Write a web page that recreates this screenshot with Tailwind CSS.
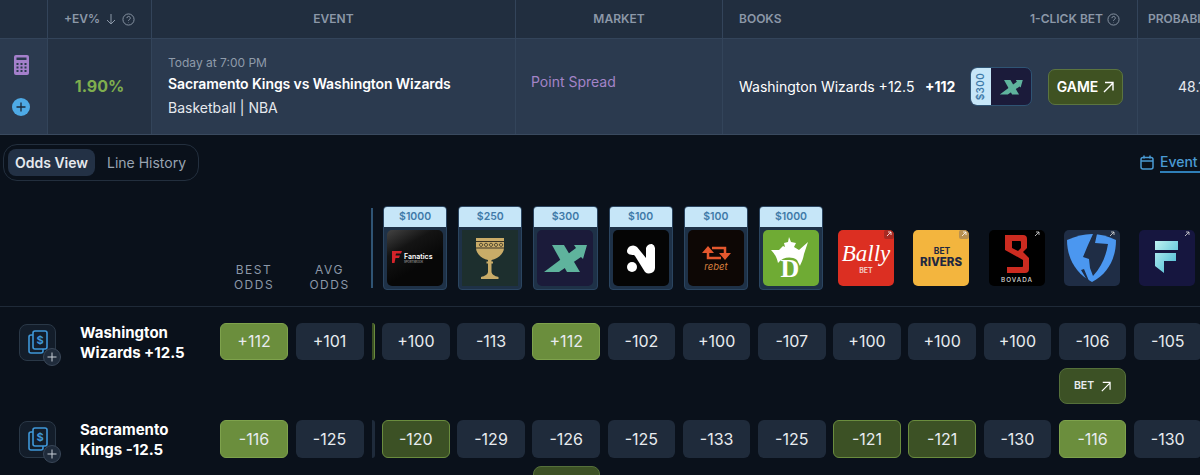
<!DOCTYPE html>
<html lang="en">
<head>
    <meta charset="UTF-8">
    <title>Odds View</title>
    <script src="https://cdn.jsdelivr.net/npm/@tailwindcss/browser@4"></script>
</head>
<body class="bg-[#0a111b] font-['Inter',sans-serif] text-white">
<div class="w-[1200px] h-[475px] overflow-hidden">

    <!-- table header -->
    <div class="flex h-[39px] w-[1300px] bg-[#212e3f] border-b border-[#33445a] text-[12px] font-semibold text-[#8c98a8]">
        <div class="w-[48px] border-r border-[#33445a]"></div>
        <div class="w-[104px] border-r border-[#33445a] flex items-center justify-center gap-[5px]">
            <span>+EV%</span>
            <svg class="w-[12px] h-[12px]" viewBox="0 0 12 12" fill="none" stroke="#8c98a8" stroke-width="1"><path d="M6 1v10M2 7l4 4 4-4"/></svg>
            <svg class="w-[13px] h-[13px]" viewBox="0 0 14 14" fill="none" stroke="#8c98a8" stroke-width="1"><circle cx="7" cy="7" r="6"/><path d="M5.3 5.5a1.8 1.8 0 1 1 2.6 1.6c-.6.3-.9.7-.9 1.3M7 10.2v.4"/></svg>
        </div>
        <div class="w-[364px] border-r border-[#33445a] flex items-center justify-center">EVENT</div>
        <div class="w-[207px] border-r border-[#33445a] flex items-center justify-center">MARKET</div>
        <div class="w-[415px] border-r border-[#33445a] flex items-center justify-between pl-[16px] pr-[17px]">
            <span>BOOKS</span>
            <span class="flex items-center gap-[4px]">1-CLICK BET
                <svg class="w-[13px] h-[13px]" viewBox="0 0 14 14" fill="none" stroke="#8c98a8" stroke-width="1"><circle cx="7" cy="7" r="6"/><path d="M5.3 5.5a1.8 1.8 0 1 1 2.6 1.6c-.6.3-.9.7-.9 1.3M7 10.2v.4"/></svg>
            </span>
        </div>
        <div class="flex-1 flex items-center pl-[10px]">PROBABILITY</div>
    </div>

    <!-- table row -->
    <div class="flex h-[96px] w-[1300px] bg-[#2b3a4f] border-b border-[#3a4a5f]">
        <div class="w-[48px] border-r border-[#33445a] flex flex-col items-center justify-between pt-[16px] pb-[18px] pr-[5px]">
            <svg class="w-[15px] h-[20px]" viewBox="0 0 15 20"><rect width="15" height="20" rx="2" fill="#a47fcb"/><rect x="2.5" y="2.5" width="10" height="2.5" fill="#2b3a4f"/><path d="M2.5 8h2v2h-2zM6.500 8h2v2h-2zM10.500 8h2v2h-2zM2.500 11.500h2v2h-2zM6.500 11.500h2v2h-2zM10.500 11.500h2v2h-2zM2.500 15h2v2h-2zM6.500 15h2v2h-2zM10.500 15h2v2h-2z" fill="#2b3a4f"/></svg>
            <svg class="w-[18px] h-[18px]" viewBox="0 0 18 18"><circle cx="9" cy="9" r="9" fill="#4eaae6"/><path d="M9 4.500v9M4.500 9h9" stroke="#1c2938" stroke-width="1.300"/></svg>
        </div>
        <div class="w-[104px] bg-[#253244] border-r border-[#33445a] flex items-center justify-center pb-[2px] text-[16px] font-bold text-[#7fae4e]">1.90%</div>
        <div class="w-[364px] border-r border-[#33445a] pl-[16px] pt-[15px]">
            <div class="text-[12px] leading-[18px] text-[#8f9baa]">Today at 7:00 PM</div>
            <div class="text-[14px] leading-[24px] font-semibold tracking-[-0.1px]">Sacramento Kings vs Washington Wizards</div>
            <div class="text-[14px] leading-[22px] text-[#e6e9ee] mt-[1px]">Basketball | NBA</div>
        </div>
        <div class="w-[207px] border-r border-[#33445a] pl-[15px] pt-[33px] text-[14px] leading-[20px] text-[#a484c8]">Point Spread</div>
        <div class="w-[415px] border-r border-[#33445a] flex items-center pl-[16px]">
            <span class="text-[14px] w-[186px]">Washington Wizards +12.5</span>
            <span class="text-[14px] font-bold w-[45px]">+112</span>
            <div class="flex w-[62px] h-[39px] rounded-[7px] overflow-hidden border border-[#2f5474] bg-[#1b1b3a]">
                <div class="w-[20px] bg-[#c6e6f8] flex items-center justify-center">
                    <span class="-rotate-90 text-[10px] font-semibold text-[#3f7aa8] tracking-[0.4px]">$300</span>
                </div>
                <div class="flex-1 flex items-center justify-center">
                    <svg class="w-[30px] h-[30px]" viewBox="0 0 56 56" fill="#5fb39d"><path d="M15 15h12l16 27H30z"/><path d="M7 42h15l22-15 2 2 4-14H37l2 3z"/></svg>
                </div>
            </div>
            <div class="ml-[16px] w-[75px] h-[36px] rounded-[7px] bg-[#3f5222] border border-[#5b7440] flex items-center justify-center gap-[4px] text-[14px] font-semibold">GAME
                <svg class="w-[12px] h-[12px]" viewBox="0 0 12 12" fill="none" stroke="white" stroke-width="1.400"><path d="M2 11 11 2M3 1.500h8v8"/></svg>
            </div>
        </div>
        <div class="flex-1 pl-[40px] pt-[38px] text-[14px] leading-[20px] text-[#e6e9ee]">48.1%</div>
    </div>

    <!-- tabs -->
    <div class="flex items-start justify-between pt-[9px] pl-[3px] w-[1260px]">
        <div class="flex items-center h-[37px] w-[196px] rounded-[14px] border border-[#232f3e] pl-[4px] text-[14px]">
            <div class="w-[87px] h-[27px] rounded-[8px] bg-[#233145] flex items-center justify-center font-semibold text-[#e6e9ee]">Odds View</div>
            <div class="ml-[12px] text-[#99a4b2]">Line History</div>
        </div>
        <div class="flex items-center gap-[6px] text-[14px] font-medium text-[#4a9bd4] h-[37px] w-[120px]">
            <svg class="w-[14px] h-[15px]" viewBox="0 0 14 15" fill="none" stroke="#4a9bd4" stroke-width="1.500"><rect x="1" y="2.500" width="12" height="11.500" rx="2"/><path d="M1 6h12M4 .500v3M10 .500v3"/></svg>
            <span class="border-b-2 border-[#2f7fb8] leading-[18px]">Event Links</span>
        </div>
    </div>

    <!-- books header -->
    <div class="flex items-start pt-[25px] pb-[16px] w-[1300px] border-b border-[#1f2a38]">
        <div class="w-[220px]"></div>
        <div class="w-[68px] h-[84px] relative">
            <div class="absolute left-0 right-0 top-[56px] text-[12px] leading-[15px] tracking-[1.500px] text-[#8c98a8] text-center">BEST<br>ODDS</div>
        </div>
        <div class="ml-[7.500px] w-[68px] h-[84px] relative">
            <div class="absolute left-0 right-0 top-[56px] text-[12px] leading-[15px] tracking-[1.500px] text-[#8c98a8] text-center">AVG<br>ODDS</div>
        </div>
        <div class="ml-[7px] w-[2px] h-[80px] mt-[2px] bg-[#2f5474]"></div>
        <div class="ml-[10.500px] flex gap-[11px]">

            <div class="w-[64.200px] h-[84px] rounded-[4px] bg-[#1e3147] border border-[#2b4560] overflow-hidden">
                <div class="h-[20px] bg-[#c6e6f8] text-[#3f7aa8] text-[10.500px] font-semibold flex items-center justify-center">$1000</div>
                <svg class="w-[56px] h-[56px] mx-auto mt-[3px] rounded-[5px]" viewBox="0 0 56 56"><defs><linearGradient id="fan" x1="0.100" y1="0" x2="0.500" y2="0.700"><stop offset="0" stop-color="#3d3d3d"/><stop offset="0.450" stop-color="#141414"/><stop offset="1" stop-color="#070707"/></linearGradient></defs><rect width="56" height="56" fill="url(#fan)"/><path fill="#d4232a" d="M5 21h10l-1 2.500H9l-.5 2H13l-1 2.500H8.500l-1 5H5z"/><text x="17" y="29" font-size="7" font-weight="600" fill="#fff" font-family="Inter">Fanatics</text><text x="17" y="33" font-size="2.800" fill="#bbb" font-family="Inter">SPORTSBOOK</text></svg>
            </div>

            <div class="w-[64.200px] h-[84px] rounded-[4px] bg-[#1e3147] border border-[#2b4560] overflow-hidden">
                <div class="h-[20px] bg-[#c6e6f8] text-[#3f7aa8] text-[10.500px] font-semibold flex items-center justify-center">$250</div>
                <svg class="w-[56px] h-[56px] mx-auto mt-[3px]" viewBox="0 0 56 56"><rect width="56" height="56" fill="#1d2f2e"/><path fill="#c9ac68" d="M14 8h28v10c0 6-7 11-12.500 12v1.500h1.500v2h-1.500v8c0 3 3 4.500 7 5.500v2H19v-2c4-1 7-2.500 7-5.500v-8h-1.500v-2H26V30c-5.500-1-12-6-12-12z"/><path fill="none" stroke="#3a3528" stroke-width="1" d="M14 11.500h28M14 18h28"/><path fill="none" stroke="#3a3528" stroke-width=".9" d="M19 13.200a1.600 1.600 0 1 0 .1 0M24 13.200a1.600 1.600 0 1 0 .1 0M29 13.200a1.600 1.600 0 1 0 .1 0M34 13.200a1.600 1.600 0 1 0 .1 0M39 13.200a1.600 1.600 0 1 0 .1 0"/></svg>
            </div>

            <div class="w-[64.200px] h-[84px] rounded-[4px] bg-[#1e3147] border border-[#2b4560] overflow-hidden">
                <div class="h-[20px] bg-[#c6e6f8] text-[#3f7aa8] text-[10.500px] font-semibold flex items-center justify-center">$300</div>
                <svg class="w-[56px] h-[56px] mx-auto mt-[3px] rounded-[5px]" viewBox="0 0 56 56" fill="#5fb39d"><rect width="56" height="56" fill="#1b1b3a"/><path d="M15 15h12l16 27H30z"/><path d="M7 42h15l22-15 2 2 4-14H37l2 3z"/></svg>
            </div>

            <div class="w-[64.200px] h-[84px] rounded-[4px] bg-[#1e3147] border border-[#2b4560] overflow-hidden">
                <div class="h-[20px] bg-[#c6e6f8] text-[#3f7aa8] text-[10.500px] font-semibold flex items-center justify-center">$100</div>
                <svg class="w-[56px] h-[56px] mx-auto mt-[3px] rounded-[5px]" viewBox="0 0 56 56"><rect width="56" height="56" fill="#050505"/><path fill="#fff" d="M14 21a6 6 0 0 1 10-4l9 11v-10a6 6 0 0 1 6-4 5 5 0 0 1 3 4v20a6 6 0 0 1-10 4L22 26l-1-1c-4 0-7-1-7-4z"/><circle cx="19" cy="37" r="5" fill="#fff"/></svg>
            </div>

            <div class="w-[64.200px] h-[84px] rounded-[4px] bg-[#1e3147] border border-[#2b4560] overflow-hidden">
                <div class="h-[20px] bg-[#c6e6f8] text-[#3f7aa8] text-[10.500px] font-semibold flex items-center justify-center">$100</div>
                <svg class="w-[56px] h-[56px] mx-auto mt-[3px] rounded-[5px]" viewBox="0 0 56 56"><rect width="56" height="56" fill="#0d0705"/><path fill="none" stroke="#e4572e" stroke-width="2.500" d="M20 22v6h13M24 18h13v6"/><path fill="#e4572e" d="M14 23h12l-6-7zM31 23h12l-6 7z"/><text x="28" y="40" text-anchor="middle" font-size="9.500" font-style="italic" fill="#d9803f" font-family="Inter">rebet</text></svg>
            </div>

            <div class="w-[64.200px] h-[84px] rounded-[4px] bg-[#1e3147] border border-[#2b4560] overflow-hidden">
                <div class="h-[20px] bg-[#c6e6f8] text-[#3f7aa8] text-[10.500px] font-semibold flex items-center justify-center">$1000</div>
                <svg class="w-[56px] h-[56px] mx-auto mt-[3px] rounded-[5px]" viewBox="0 0 56 56"><rect width="56" height="56" fill="#6fab34"/><path fill="#fff" d="M8 20h8l4-4 2 1-1-4 4-1 1-5 2 5 5 1-2 4 5 3 9-8-4 12c-1 6-3 9-4 12l-3-6c-6-4-14-3-19 3-1-5-3-9-7-13z"/><text x="27" y="47" text-anchor="middle" font-size="26" font-weight="700" fill="#fff" font-family="Liberation Serif">D</text></svg>
            </div>

            <div class="w-[64.200px] h-[84px] pt-[24px] pl-[4px]">
                <svg class="w-[56px] h-[56px] rounded-[5px]" viewBox="0 0 56 56"><rect width="56" height="56" fill="#dc2f22"/><rect x="46" y="0" width="10" height="9" rx="2" fill="#a82a22"/><path d="M49 6l4-4M50 2h3v3" stroke="#fff" stroke-width=".8" fill="none"/><text x="28" y="31" text-anchor="middle" font-size="23" font-style="italic" fill="#fff" font-family="Liberation Serif">Bally</text><text x="28" y="43" text-anchor="middle" font-size="7" font-weight="700" fill="#f3c9c4" font-family="Inter">BET</text></svg>
            </div>

            <div class="w-[64.200px] h-[84px] pt-[24px] pl-[4px]">
                <svg class="w-[56px] h-[56px] rounded-[5px]" viewBox="0 0 56 56"><rect width="56" height="56" fill="#f3b53e"/><rect x="46" y="0" width="10" height="9" rx="2" fill="#b89050"/><path d="M49 6l4-4M50 2h3v3" stroke="#fff" stroke-width=".8" fill="none"/><text x="29" y="24" text-anchor="middle" font-size="8.500" font-weight="700" fill="#1f2740" font-family="Inter">BET</text><text x="28" y="36" text-anchor="middle" font-size="11.500" font-weight="800" fill="#1f2740" font-family="Inter">RIVERS</text></svg>
            </div>

            <div class="w-[64.200px] h-[84px] pt-[24px] pl-[4px]">
                <svg class="w-[56px] h-[56px] rounded-[5px]" viewBox="0 0 56 56"><rect width="56" height="56" fill="#000"/><path d="M46 6l4-4M47 2h3v3" stroke="#ddd" stroke-width=".8" fill="none"/><path fill="#cc2b20" fill-rule="evenodd" d="M16 5h18a4 4 0 0 1 4 4v9l-4 4 6 6v11a4 4 0 0 1-4 4H18v-6h15c.5 0 1-.5 1-1v-6L16 20zM23 11v7l6 3 3-3v-6c0-.5-.5-1-1-1z"/><text x="28" y="52" text-anchor="middle" font-size="6.300" font-weight="500" letter-spacing="1" fill="#d8d8d8" font-family="Inter">BOVADA</text></svg>
            </div>

            <div class="w-[64.200px] h-[84px] pt-[24px] pl-[4px]">
                <svg class="w-[56px] h-[56px] rounded-[5px]" viewBox="0 0 56 56"><rect width="56" height="56" fill="#1f2d45"/><path d="M46 6l4-4M47 2h3v3" stroke="#ddd" stroke-width=".8" fill="none"/><path fill="#4b97f0" d="M3 10C12 6 20 4 28 4s16 2 24 6c0 18-8 34-24 42C12 44 3 28 3 10z"/><path fill="#1f2d45" d="M29 4h4l-2 9 13 1c-2 12-6 22-15 32l-3-8-1-9-6-2 5-12zM20 39l5 12-2-1-6-10z"/></svg>
            </div>

            <div class="w-[64.200px] h-[84px] pt-[24px] pl-[4px]">
                <svg class="w-[56px] h-[56px] rounded-[5px]" viewBox="0 0 56 56"><defs><linearGradient id="fl" x1="0" y1="0" x2="1" y2="1"><stop offset="0" stop-color="#bff2f2"/><stop offset="1" stop-color="#3fb5d0"/></linearGradient></defs><rect width="56" height="56" fill="#16163f"/><path d="M46 6l4-4M47 2h3v3" stroke="#ddd" stroke-width=".8" fill="none"/><path fill="url(#fl)" d="M16 11h23v9H16zM16 23h21v8H25v12l-9-7z"/></svg>
            </div>
        </div>
    </div>

    <!-- team 1 -->
    <div class="flex pt-[15.500px] w-[1300px]">
        <div class="relative ml-[19px] mt-[1.500px] w-[37px] h-[37px] rounded-[8px] border border-[#2a3847] bg-[#131d2a] flex items-center justify-center">
            <svg class="w-[20px] h-[25px]" viewBox="0 0 20 25" fill="none" stroke="#3f97d8" stroke-width="1.600"><rect x="5" y="1" width="14" height="18" rx="2"/><path d="M5 5H3a2 2 0 0 0-2 2v14a2 2 0 0 0 2 2h10a2 2 0 0 0 2-2v-2"/><text x="12" y="14" text-anchor="middle" font-size="11" font-weight="700" fill="#3f97d8" stroke="none" font-family="Inter">$</text></svg>
            <div class="absolute -right-[6px] -bottom-[6px] w-[18px] h-[18px] rounded-full bg-[#1f2b3b] border border-[#3a4758] flex items-center justify-center">
                <svg class="w-[10px] h-[10px]" viewBox="0 0 10 10" stroke="#c9d0d8" stroke-width="1"><path d="M5 .5v9M.5 5h9"/></svg>
            </div>
        </div>
        <div class="ml-[24px] w-[140px] text-[15px] leading-[20px] font-bold">Washington<br>Wizards +12.5</div>
        <div class="flex text-[16px] text-[#e8ebef]">
            <div class="w-[68px] h-[37.500px] rounded-[6px] bg-[#6b8e3d] border border-[#7ea24c] flex items-center justify-center">+112</div>
            <div class="ml-[7.500px] w-[68px] h-[37.500px] rounded-[6px] bg-[#1f2b3b] flex items-center justify-center">+101</div>
            <div class="ml-[8px] w-[3px] h-[37.500px] rounded-r-[6px] bg-[#3c5125] border-r border-[#6a8c3e]"></div>
            <div class="ml-[7.500px] flex flex-col">
                <div class="flex gap-[7.500px]">
                    <div class="w-[67.700px] h-[37.500px] rounded-[6px] bg-[#1f2b3b] flex items-center justify-center">+100</div>
                    <div class="w-[67.700px] h-[37.500px] rounded-[6px] bg-[#1f2b3b] flex items-center justify-center">-113</div>
                    <div class="w-[67.700px] h-[37.500px] rounded-[6px] bg-[#6b8e3d] border border-[#7ea24c] flex items-center justify-center">+112</div>
                    <div class="w-[67.700px] h-[37.500px] rounded-[6px] bg-[#1f2b3b] flex items-center justify-center">-102</div>
                    <div class="w-[67.700px] h-[37.500px] rounded-[6px] bg-[#1f2b3b] flex items-center justify-center">+100</div>
                    <div class="w-[67.700px] h-[37.500px] rounded-[6px] bg-[#1f2b3b] flex items-center justify-center">-107</div>
                    <div class="w-[67.700px] h-[37.500px] rounded-[6px] bg-[#1f2b3b] flex items-center justify-center">+100</div>
                    <div class="w-[67.700px] h-[37.500px] rounded-[6px] bg-[#1f2b3b] flex items-center justify-center">+100</div>
                    <div class="w-[67.700px] h-[37.500px] rounded-[6px] bg-[#1f2b3b] flex items-center justify-center">+100</div>
                    <div class="w-[67.700px] h-[37.500px] rounded-[6px] bg-[#1f2b3b] flex items-center justify-center">-106</div>
                    <div class="w-[67.700px] h-[37.500px] rounded-[6px] bg-[#1f2b3b] flex items-center justify-center">-105</div>
                </div>
                <div class="mt-[8px] ml-[677px] w-[67px] h-[36px] rounded-[8px] bg-[#3c5125] border border-[#55703a] flex items-center justify-center gap-[6px] text-[10.500px] font-semibold">BET
                    <svg class="w-[11px] h-[11px]" viewBox="0 0 12 12" fill="none" stroke="white" stroke-width="1.300"><path d="M2 11 11 2M3 1.500h8v8"/></svg>
                </div>
            </div>
        </div>
    </div>

    <!-- team 2 -->
    <div class="flex mt-[16px] w-[1300px]">
        <div class="relative ml-[19px] mt-[1px] w-[37px] h-[37px] rounded-[8px] border border-[#2a3847] bg-[#131d2a] flex items-center justify-center">
            <svg class="w-[20px] h-[25px]" viewBox="0 0 20 25" fill="none" stroke="#3f97d8" stroke-width="1.600"><rect x="5" y="1" width="14" height="18" rx="2"/><path d="M5 5H3a2 2 0 0 0-2 2v14a2 2 0 0 0 2 2h10a2 2 0 0 0 2-2v-2"/><text x="12" y="14" text-anchor="middle" font-size="11" font-weight="700" fill="#3f97d8" stroke="none" font-family="Inter">$</text></svg>
            <div class="absolute -right-[6px] -bottom-[6px] w-[18px] h-[18px] rounded-full bg-[#1f2b3b] border border-[#3a4758] flex items-center justify-center">
                <svg class="w-[10px] h-[10px]" viewBox="0 0 10 10" stroke="#c9d0d8" stroke-width="1"><path d="M5 .5v9M.5 5h9"/></svg>
            </div>
        </div>
        <div class="ml-[24px] w-[140px] text-[15px] leading-[20px] font-bold">Sacramento<br>Kings -12.5</div>
        <div class="flex text-[16px] text-[#e8ebef]">
            <div class="w-[68px] h-[37.500px] rounded-[6px] bg-[#6b8e3d] border border-[#7ea24c] flex items-center justify-center">-116</div>
            <div class="ml-[7.500px] w-[68px] h-[37.500px] rounded-[6px] bg-[#1f2b3b] flex items-center justify-center">-125</div>
            <div class="ml-[8px] w-[3px] h-[37.500px] rounded-r-[6px] bg-[#1f2b3b]"></div>
            <div class="ml-[7.500px] flex flex-col">
                <div class="flex gap-[7.500px]">
                    <div class="w-[67.700px] h-[37.500px] rounded-[6px] bg-[#3c5125] border border-[#6a8c3e] flex items-center justify-center">-120</div>
                    <div class="w-[67.700px] h-[37.500px] rounded-[6px] bg-[#1f2b3b] flex items-center justify-center">-129</div>
                    <div class="w-[67.700px] h-[37.500px] rounded-[6px] bg-[#1f2b3b] flex items-center justify-center">-126</div>
                    <div class="w-[67.700px] h-[37.500px] rounded-[6px] bg-[#1f2b3b] flex items-center justify-center">-125</div>
                    <div class="w-[67.700px] h-[37.500px] rounded-[6px] bg-[#1f2b3b] flex items-center justify-center">-133</div>
                    <div class="w-[67.700px] h-[37.500px] rounded-[6px] bg-[#1f2b3b] flex items-center justify-center">-125</div>
                    <div class="w-[67.700px] h-[37.500px] rounded-[6px] bg-[#3c5125] border border-[#6a8c3e] flex items-center justify-center">-121</div>
                    <div class="w-[67.700px] h-[37.500px] rounded-[6px] bg-[#3c5125] border border-[#6a8c3e] flex items-center justify-center">-121</div>
                    <div class="w-[67.700px] h-[37.500px] rounded-[6px] bg-[#1f2b3b] flex items-center justify-center">-130</div>
                    <div class="w-[67.700px] h-[37.500px] rounded-[6px] bg-[#6b8e3d] border border-[#7ea24c] flex items-center justify-center">-116</div>
                    <div class="w-[67.700px] h-[37.500px] rounded-[6px] bg-[#1f2b3b] flex items-center justify-center">-130</div>
                </div>
                <div class="mt-[8px] ml-[150.500px] w-[67px] h-[36px] rounded-[8px] bg-[#3c5125] border border-[#55703a]"></div>
            </div>
        </div>
    </div>
</div>
</body>
</html>
